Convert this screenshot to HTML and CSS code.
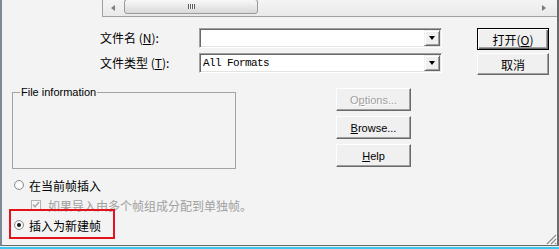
FILE: index.html
```html
<!DOCTYPE html>
<html>
<head>
  <meta charset="utf-8">
  <title>打开</title>
  <link rel="stylesheet" href="styles.css">
</head>
<body>
  <div class="dialog">
    <div class="file-list">
      <div class="hscroll">
        <span class="arrow arrow-left"></span>
        <span class="thumb"><span class="grip"></span></span>
        <span class="arrow arrow-right"></span>
      </div>
    </div>

    <div class="file-form">
      <label class="field-label">文件名 (<u>N</u>):</label>
      <div class="combo"><span class="combo-value"></span><span class="combo-btn"></span></div>
      <button class="btn btn-default">打开(<u>O</u>)</button>

      <label class="field-label">文件类型 (<u>T</u>):</label>
      <div class="combo"><span class="combo-value">All Formats</span><span class="combo-btn"></span></div>
      <button class="btn">取消</button>
    </div>

    <div class="info-row">
      <fieldset class="info-box">
        <legend>File information</legend>
      </fieldset>
      <div class="side-buttons">
        <button class="btn btn-small" disabled>O<u>p</u>tions...</button>
        <button class="btn btn-small"><u>B</u>rowse...</button>
        <button class="btn btn-small"><u>H</u>elp</button>
      </div>
    </div>

    <div class="insert-options">
      <label class="radio-row first"><span class="radio"></span>在当前帧插入</label>
      <label class="check-row">
        <svg class="checkbox" width="10" height="10" viewBox="0 0 10 10">
          <rect x="0.5" y="0.5" width="9" height="9" fill="#f6f6f6" stroke="#b4b4b4"/>
          <path d="M2 4.5 L4 7 L8 2" fill="none" stroke="#a6a6a6" stroke-width="1.4"/>
        </svg>
        如果导入由多个帧组成分配到单独帧。
      </label>
      <div class="highlight">
        <label class="radio-row"><span class="radio checked"></span>插入为新建帧</label>
      </div>
    </div>

    <svg class="size-grip" width="12" height="12" viewBox="0 0 12 12">
      <path d="M11 2 L2 11 M11 6 L6 11 M11 10 L10 11" stroke="#8e8e8e" stroke-width="1.2"/>
      <path d="M12 3 L3 12 M12 7 L7 12" stroke="#ffffff" stroke-width="1"/>
    </svg>
  </div>
  <div class="taskbar-edge"></div>
</body>
</html>
```

FILE: styles.css
```css
* {
  box-sizing: border-box;
}

body {
  margin: 0;
  width: 559px;
  height: 249px;
  overflow: hidden;
  background-color: #f3f3f3;
  font-family: "Noto Sans CJK SC", "Liberation Sans", sans-serif;
  font-size: 12px;
  color: #000;
}

.dialog {
  position: relative;
  height: 246px;
  border-left: 2px solid #7d8b99;
  border-right: 2px solid #6b6b6b;
  border-bottom: 1px solid #6b6b6b;
}

.taskbar-edge {
  height: 3px;
  border-top: 1px solid #e4f1f6;
  background-color: #3ec5ee;
}

/* bottom of the file list with its scrollbar */
.file-list {
  margin-left: 100px;
  height: 17px;
  border-left: 1px solid #a0a0a0;
  border-bottom: 1px solid #a0a0a0;
}

.hscroll {
  display: flex;
  align-items: flex-start;
  height: 16px;
  background: linear-gradient(#f4f4f4, #e9e9e9);
}

.arrow {
  width: 0;
  height: 0;
  margin-top: 5px;
  border-top: 3px solid transparent;
  border-bottom: 3px solid transparent;
}

.arrow-left {
  margin-left: 8px;
  border-right: 4px solid #7c7c7c;
}

.arrow-right {
  margin-left: auto;
  margin-right: 11px;
  border-left: 4px solid #7c7c7c;
}

.thumb {
  display: flex;
  justify-content: center;
  align-items: center;
  width: 134px;
  height: 15px;
  margin-left: 9px;
  margin-top: -1px;
  border: 1px solid #9a9a9a;
  border-radius: 3px;
  background: linear-gradient(#f8f8f8, #d9d9d9);
}

.grip {
  width: 7px;
  height: 5px;
  background: repeating-linear-gradient(90deg, #5c5c5c 0 1px, #fafafa 1px 2px);
}

/* name / type rows */
.file-form {
  display: grid;
  grid-template-columns: 99px 243px 107px;
  grid-auto-rows: 22px;
  row-gap: 3px;
  align-items: start;
  margin: 11px 0 0 98px;
}

.file-form .btn {
  justify-self: end;
  width: 72px;
}

.field-label {
  line-height: 20px;
  white-space: nowrap;
}

.combo {
  display: flex;
  height: 20px;
  padding: 1px;
  border: 1px solid;
  border-color: #a0a0a0 #fff #fff #a0a0a0;
  box-shadow: inset 1px 1px 0 #696969, inset -1px -1px 0 #e3e3e3;
  background-color: #fff;
}

.combo-value {
  flex: 1;
  padding-left: 2px;
  font-family: "Liberation Mono", monospace;
  font-size: 11px;
  letter-spacing: -0.6px;
  line-height: 17px;
}

.combo-btn {
  display: flex;
  justify-content: center;
  align-items: center;
  width: 16px;
  height: 16px;
  border: 1px solid;
  border-color: #f0f0f0 #696969 #696969 #f0f0f0;
  box-shadow: inset 1px 1px 0 #fff, inset -1px -1px 0 #a0a0a0;
  background-color: #f0f0f0;
}

.combo-btn::after {
  content: "";
  border-left: 3.5px solid transparent;
  border-right: 3.5px solid transparent;
  border-top: 4px solid #000;
}

.btn {
  height: 22px;
  padding: 0;
  font-family: inherit;
  font-size: 12px;
  color: #000;
  background-color: #f0f0f0;
  border: 1px solid;
  border-color: #fff #696969 #696969 #fff;
  box-shadow: inset -1px -1px 0 #a0a0a0;
}

.btn-default {
  border: 1px solid #000;
  box-shadow: inset 1px 1px 0 #fff, inset -1px -1px 0 #696969, inset -2px -2px 0 #a0a0a0;
}

.btn-small {
  width: 75px;
  height: 23px;
  font-family: "Liberation Sans", Arial, sans-serif;
  font-size: 11px;
}

.btn:disabled {
  color: #a0a0a0;
  text-shadow: 1px 1px 0 #fff;
}

/* file information + side buttons */
.info-row {
  display: flex;
  align-items: flex-start;
  margin-top: 13px;
}

.info-box {
  width: 224px;
  height: 83px;
  margin: -2px 0 0 10px;
  padding: 0;
  border: 1px solid #a3a3a3;
}

.info-box legend {
  margin-left: 7px;
  padding: 0 1px;
  font-family: "Liberation Sans", Arial, sans-serif;
  font-size: 11px;
  line-height: 12px;
}

.side-buttons {
  display: flex;
  flex-direction: column;
  gap: 5px;
  margin-left: 100px;
}

/* insert options */
.insert-options {
  display: flex;
  flex-direction: column;
  align-items: flex-start;
  padding-left: 12px;
}

.radio-row,
.check-row {
  display: flex;
  align-items: center;
  height: 14px;
  white-space: nowrap;
}

.radio-row.first {
  margin-top: 9px;
}

.check-row {
  margin: 6px 0 0 17px;
  color: #a0a0a0;
}

.checkbox {
  margin-right: 7px;
}

.radio {
  display: flex;
  justify-content: center;
  align-items: center;
  width: 10px;
  height: 10px;
  margin-right: 5px;
  border: 1px solid #8d8d8d;
  border-radius: 50%;
  background: radial-gradient(#fff 40%, #e6e6e6);
}

.radio.checked::after {
  content: "";
  width: 4px;
  height: 4px;
  border-radius: 50%;
  background-color: #151515;
}

.highlight {
  width: 106px;
  height: 30px;
  margin: -3px 0 0 -5px;
  padding: 7px 0 0 3px;
  border: 2px solid #e3131b;
}

.size-grip {
  position: absolute;
  right: 0;
  bottom: 0;
}
```
